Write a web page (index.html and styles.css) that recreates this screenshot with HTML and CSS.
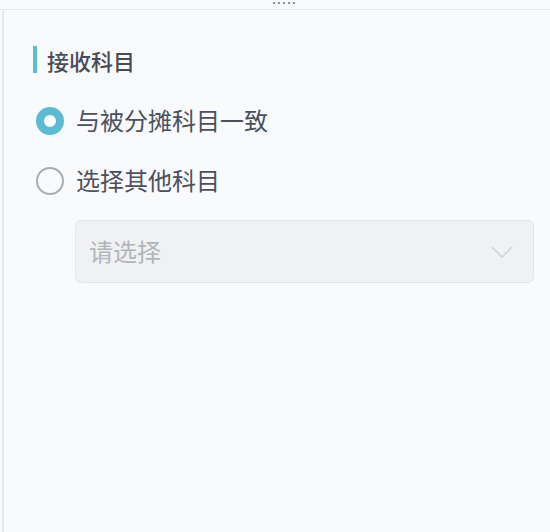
FILE: index.html
```html
<!doctype html>
<html>
<head>
  <title>接收科目</title>
  <meta charset="utf-8">
  <link rel="stylesheet" href="styles.css">
</head>
<body>
  <div class="topbar">
    <div class="dots"><i></i><i></i><i></i><i></i><i></i></div>
  </div>
  <div class="panel">
    <h2 class="title">接收科目</h2>
    <div class="options">
      <label class="option">
        <span class="radio checked"></span>
        <span>与被分摊科目一致</span>
      </label>
      <label class="option">
        <span class="radio"></span>
        <span>选择其他科目</span>
      </label>
    </div>
    <div class="select">
      <span class="placeholder">请选择</span>
      <svg class="arrow" width="22" height="12" viewBox="0 0 22 12">
        <path d="M1 1 L11 11 L21 1" fill="none" stroke="#cfd2d7" stroke-width="1.5"/>
      </svg>
    </div>
  </div>
</body>
</html>
```

FILE: styles.css
```css
html, body {
  height: 100%;
}
body {
  margin: 0;
  background: #f9fafc;
  font-family: "Noto Sans CJK SC", "Noto Sans", sans-serif;
  color: #4b505c;
  display: flex;
  flex-direction: column;
}
.topbar {
  height: 9px;
  border-bottom: 1px solid #e5e7ed;
  display: flex;
  justify-content: center;
}
.dots {
  display: flex;
  gap: 3px;
  padding-top: 2px;
  margin-left: 18px;
}
.dots i {
  width: 2px;
  height: 2px;
  background: #8a8d94;
}
.panel {
  flex: 1;
  margin-left: 2px;
  border-left: 2px solid #e6e8ee;
  padding: 36px 16px 0 29px;
}
.title {
  margin: 0;
  display: flex;
  align-items: center;
  height: 27px;
  font-size: 22px;
  font-weight: 500;
  color: #474c58;
}
.title::before {
  content: "";
  width: 4px;
  height: 27px;
  background: #5bbcd1;
  margin-right: 10px;
}
.options {
  margin-top: 18px;
}
.option {
  display: flex;
  align-items: center;
  height: 60px;
  font-size: 24px;
  line-height: 28px;
  color: #4b505c;
}
.option span:last-child {
  margin-top: -3px;
}
.radio {
  box-sizing: border-box;
  width: 28px;
  height: 28px;
  border-radius: 50%;
  border: 2px solid #a8acb6;
  margin-left: 3px;
  margin-right: 12px;
}
.radio.checked {
  border: 8px solid #5bbcd1;
  background: #fff;
}
.select {
  box-sizing: border-box;
  margin: 9px 0 0 42px;
  height: 63px;
  border: 1px solid #e3e5e9;
  border-radius: 6px;
  background: #f0f1f3;
  display: flex;
  align-items: center;
  justify-content: space-between;
  padding: 0 20px 0 13px;
}
.placeholder {
  font-size: 24px;
  margin-top: -2px;
  color: #b1b4ba;
}
```
